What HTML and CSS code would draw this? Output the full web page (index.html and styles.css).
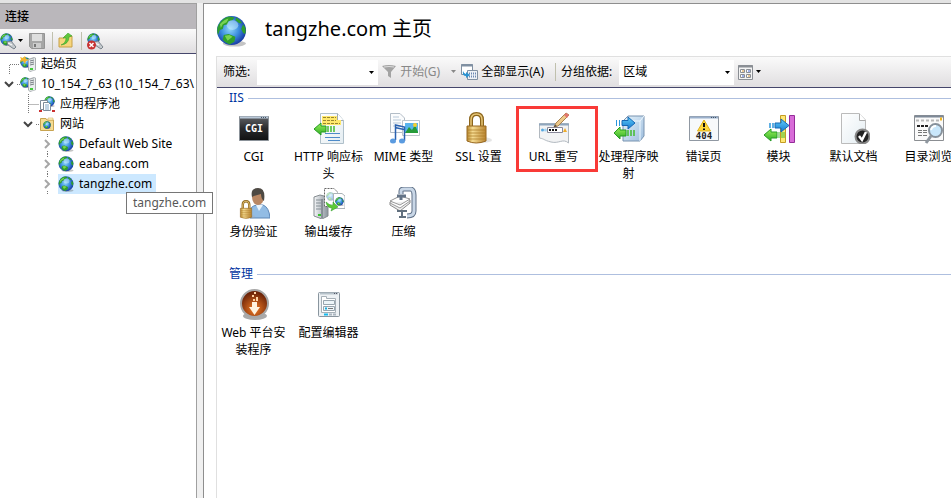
FILE: index.html
```html
<!DOCTYPE html>
<html lang="zh-CN">
<head>
<meta charset="utf-8">
<title>tangzhe.com 主页</title>
<link rel="stylesheet" href="styles.css">
</head>
<body>
<svg class="defs" aria-hidden="true">
  <defs>
    <radialGradient id="sea" cx=".45" cy=".45" r=".6"><stop offset="0" stop-color="#8fd8fa"/><stop offset=".5" stop-color="#3d8fe0"/><stop offset="1" stop-color="#12309c"/></radialGradient>
    <linearGradient id="brass" x2="1"><stop offset="0" stop-color="#b98a30"/><stop offset=".3" stop-color="#f6dc92"/><stop offset="1" stop-color="#b98430"/></linearGradient>
    <linearGradient id="green" x2="0" y2="1"><stop offset="0" stop-color="#9af05c"/><stop offset="1" stop-color="#2fae24"/></linearGradient>
    <linearGradient id="blue" x2="0" y2="1"><stop offset="0" stop-color="#5ed0fa"/><stop offset="1" stop-color="#1878d0"/></linearGradient>
    <linearGradient id="paper" x2="1" y2="1"><stop offset="0" stop-color="#fff"/><stop offset="1" stop-color="#e4edf2"/></linearGradient>
    <linearGradient id="steel" x2="1"><stop offset="0" stop-color="#f4f6f8"/><stop offset="1" stop-color="#8b949c"/></linearGradient>
    <linearGradient id="ink" x2="0" y2="1"><stop offset="0" stop-color="#606266"/><stop offset=".5" stop-color="#2a2b2d"/><stop offset="1" stop-color="#101112"/></linearGradient>
    <radialGradient id="rust" cx=".5" cy=".7" r=".6"><stop offset="0" stop-color="#f07a24"/><stop offset="1" stop-color="#6d2408"/></radialGradient>
    <linearGradient id="cube" x2="1" y2="1"><stop offset="0" stop-color="#e6f3fb"/><stop offset="1" stop-color="#9dbddd"/></linearGradient>
  </defs>
  <symbol id="globe" viewBox="0 0 32 32">
    <ellipse cx="19" cy="29" rx="12" ry="3" fill="#555" opacity=".35"/>
    <circle cx="16" cy="15.500" r="15" fill="url(#sea)"/>
    <path d="M3 9Q7 2 14 1L19 2 17 5 13 6 12 9 8 10 7 14 4 15 2 20Q0 14 3 9ZM28 9Q32 14 30 19L28 18 26 14ZM8 20L13 19 20 22 19 27 14 30Q9 28 7 25ZM21 2Q25 4 27 8L24 8 20 5Z" fill="#2f9f2c"/>
    <path d="M4 9Q8 4 13 3L11 7 7 9 5 13ZM9 21L14 20 17 22 12 26Z" fill="#8be05d" opacity=".8"/>
    <ellipse cx="17" cy="10" rx="6" ry="5" fill="#d8f5ff" opacity=".45"/>
  </symbol>
  <symbol id="server" viewBox="0 0 16 16">
    <use href="#globe" x="0" y="1" width="11" height="11"/>
    <path d="M8 3L14 1 16 2V14L10 16 8 14Z" fill="#a8adb0"/><path d="M9 4L15 2V14L10 15 9 14Z" fill="#e9eded"/>
    <path d="M10 5L14 4M10 7L14 6M10 9L14 8" stroke="#777e83"/><path d="M10 13h3" stroke="#45c93d" stroke-width="2"/>
  </symbol>
  <symbol id="connect" viewBox="0 0 17 17"><use href="#globe" width="13" height="13"/><path d="M7 9L11 8 16 14 14 16 8 12Z" fill="#c4c9cd" stroke="#7b848c"/><path d="M8 10l4 2" stroke="#fff"/></symbol>
  <symbol id="arrow" viewBox="0 0 7 4"><path d="M1 0H6L3.500 3Z" fill="currentColor"/></symbol>
  <symbol id="open" viewBox="0 0 20 20"><path d="M5 8L9 12 13 8" fill="none" stroke="#444" stroke-width="2"/></symbol>
  <symbol id="closed" viewBox="0 0 20 20"><path d="M7 6L11 10 7 14" fill="none" stroke="#a6a6a6" stroke-width="2"/><path d="M9.500 0v3M9.500 17v3" stroke="#777" stroke-dasharray="1 1"/></symbol>
  <symbol id="lock" viewBox="0 0 32 32"><ellipse cx="19" cy="28" rx="10" ry="3" fill="#aaa" opacity=".3"/><path d="M8 16V8Q8 2 13.500 2T19 8V16" fill="none" stroke="#8c651c" stroke-width="4"/><path d="M8 16V8Q8 2 13.500 2T19 8V16" fill="none" stroke="#e8c878" stroke-width="1.500"/><path d="M4 14H23V29Q13 33 4 29Z" fill="url(#brass)" stroke="#986820"/><path d="M5 18H22M5 21H22M5 24H22M5 27H22" stroke="#a97825" opacity=".7"/></symbol>
</svg>

<div class="window">
  <aside class="sidebar">
    <h2 class="pane-title">连接</h2>
    <div class="connections-bar">
      <button class="tool" aria-label="连接到"><svg width="17" height="17"><use href="#connect"/></svg><svg class="drop" width="7" height="4"><use href="#arrow"/></svg></button>
      <button class="tool save" aria-label="保存" disabled><svg width="16" height="16" viewBox="0 0 16 16"><path d="M.5.5H15.500V15.500H2.500L.5 13.500Z" fill="#a6a6a6" stroke="#949494"/><path d="M3 1H13V8H3Z" fill="#dedede"/><path d="M4 10H12V15H4Z" fill="#ccc"/><path d="M5 11H7V14H5Z" fill="#777"/></svg></button>
      <span class="split"></span>
      <button class="tool" aria-label="向上"><svg width="16" height="16" viewBox="0 0 16 16"><path d="M1 5H6L7 3H14V14H1Z" fill="#f7d67d" stroke="#c6a048"/><path d="M3 12Q8 10 8 5H5L10 0 14 3 11 4Q11 11 3 12Z" fill="#5fc63d" stroke="#339a27" stroke-width=".5"/></svg></button>
      <span class="split"></span>
      <button class="tool" aria-label="删除连接"><svg width="17" height="17" viewBox="0 0 17 17"><use href="#connect" width="17" height="17"/><circle cx="4.500" cy="12" r="4.500" fill="#c83232"/><path d="M2.500 10L6.500 14M6.500 10L2.500 14" stroke="#fff" stroke-width="1.500"/></svg></button>
    </div>
    <ul class="tree">
      <li><div class="node"><svg class="joint" viewBox="0 0 20 20"><path d="M9.500 20V10.500H20" class="dots"/></svg><svg class="glyph" viewBox="0 0 16 16"><use href="#server" width="16" height="16"/><path d="M0 1L3 2 5 0 6 3 9 4 6 5 5 8 3 5 0 6 1 3Z" fill="#f4b52c"/></svg><span>起始页</span></div></li>
      <li><div class="node"><svg class="joint" viewBox="0 0 20 20"><use href="#open"/><path d="M17 10.500H20" class="dots"/></svg><svg class="glyph"><use href="#server"/></svg><span>10_154_7_63 (10_154_7_63\</span></div>
        <ul>
          <li><div class="node"><svg class="joint" viewBox="0 0 20 20"><path d="M9.500 0V20M9.500 10.500H20" class="dots"/></svg><svg class="glyph" viewBox="0 0 16 16"><use href="#globe" x="5" width="11" height="11"/><path d="M1.500 4.500H8.500V13.500H1.500Z" fill="#fff" stroke="#7d8b98"/><path d="M4.500 6.500H9.500L11.500 8.500V14.500H4.500Z" fill="#fff" stroke="#7d8b98"/><path d="M6 9H10M6 11H10M6 13H10" stroke="#80a7c8"/><path d="M0 15H3M13 15H16" stroke="#cb3030" stroke-width="2"/></svg><span>应用程序池</span></div></li>
          <li><div class="node"><svg class="joint" viewBox="0 0 20 20"><use href="#open"/><path d="M17 10.500H20" class="dots"/></svg><svg class="glyph" viewBox="0 0 16 16"><path d="M1.500 2.500H7L8 4H14.500V14.500H1.500Z" fill="#f6dc91" stroke="#c8a451"/><path d="M9 2H14V4H9Z" fill="#fff5c5" stroke="#c8a451" stroke-width=".5"/><use href="#globe" x="4" y="5" width="8" height="8"/></svg><span>网站</span></div>
            <ul>
              <li><div class="node"><svg class="joint"><use href="#closed"/></svg><svg class="glyph"><use href="#globe"/></svg><span>Default Web Site</span></div></li>
              <li><div class="node"><svg class="joint"><use href="#closed"/></svg><svg class="glyph"><use href="#globe"/></svg><span>eabang.com</span></div></li>
              <li><div class="node"><svg class="joint"><use href="#closed"/></svg><div class="selected"><svg class="glyph"><use href="#globe"/></svg><span>tangzhe.com</span></div></div></li>
            </ul>
          </li>
        </ul>
      </li>
    </ul>
    <div class="tooltip" role="tooltip">tangzhe.com</div>
  </aside>

  <main class="page">
    <header class="page-head"><svg width="31" height="32"><use href="#globe"/></svg><h1>tangzhe.com 主页</h1></header>
    <div class="features">
      <div class="filter-bar">
        <label for="filter">筛选:</label>
        <span class="combo"><input id="filter" type="text"><svg class="combo-arrow" width="7" height="4"><use href="#arrow"/></svg></span>
        <button class="command start" disabled><svg width="15" height="14" viewBox="0 0 15 14"><path d="M0 1Q7-1 14 1L9 7V13L6 11V7Z" fill="#a3a3a3"/><path d="M2 2Q7 1 12 2" stroke="#ddd" fill="none"/></svg>开始(G)<svg class="drop" width="7" height="4"><use href="#arrow"/></svg></button>
        <button class="command all"><svg width="17" height="16" viewBox="0 0 17 16"><path d="M.5.5H11.500V10.500H.5Z" fill="#fff" stroke="#8090a2"/><path d="M0 1.500H12" stroke="#8090a2" stroke-width="2"/><path d="M6.500 6.500H16.500V15.500H6.500Z" fill="#eef2f6" stroke="#8090a2"/><path d="M8 9.500H15M8 12.500H15" stroke="#6b87b3" stroke-dasharray="1 1" stroke-width="2"/><path d="M2 7Q3 10 5 10V8L9 11 5 14V12Q1 12 2 7Z" fill="#2c93d1"/></svg>全部显示(A)</button>
        <span class="split"></span>
        <label for="group">分组依据:</label>
        <span class="combo"><select id="group"><option>区域</option></select><svg class="combo-arrow" width="7" height="4"><use href="#arrow"/></svg></span>
        <button class="command view" aria-label="视图"><svg width="15" height="15" viewBox="0 0 15 15"><path d="M.5.5H14.500V14.500H.5Z" fill="#f4f4f4" stroke="#8a8e94"/><path d="M0 1.500H15" stroke="#8a8e94" stroke-width="2"/><g fill="#fff" stroke="#8a8e94"><path d="M2.500 4.500h4v3h-4zM8.500 4.500h4v3h-4zM2.500 9.500h4v3h-4zM8.500 9.500h4v3h-4z"/></g><path d="M4 6h2M10 11h2" stroke="#d09030"/><path d="M10 6h2M4 11h2" stroke="#4060d0"/></svg><svg class="drop" width="7" height="4"><use href="#arrow"/></svg></button>
      </div>

      <section class="group">
        <h3>IIS</h3>
        <div class="grid">
          <a class="item" href="#"><svg viewBox="0 0 32 32"><path d="M1.500 4.500H30.500V28.500H1.500Z" fill="url(#ink)" stroke="#8b9299"/><path d="M2 5.500H30" stroke="#b9c8d8" stroke-width="2"/><path d="M23 5.500H29" stroke="#456" stroke-dasharray="1 1"/><text x="16" y="20" class="cgi">CGI</text></svg><span>CGI</span></a>
          <a class="item" href="#"><svg viewBox="0 0 32 32"><path d="M7.500 1.500H24.500L30.500 8.500V31.500H7.500Z" fill="url(#paper)" stroke="#b0c0ca"/><path d="M24.500 1.500V8.500H30.500" fill="#fff" stroke="#a0aab2"/><path d="M9 4H24V8H28V13H9Z" fill="#ffe86b"/><path d="M10 5.500H23M10 8.500H23M10 11.500H27" stroke="#9a862d" stroke-dasharray="3 1"/><path d="M1 17L8 11V14H13V20H8V23Z" fill="url(#green)" stroke="#249b22"/><path d="M15 14V20M18 14V20M21 14V20" stroke="#45bd32" stroke-width="1.500"/><path d="M12 21.500H27M12 25.500H27M15 28.500H27" stroke="#4e8bc9"/></svg><span>HTTP 响应标<br>头</span></a>
          <a class="item" href="#"><svg viewBox="0 0 32 32"><path d="M2.500 1.500H12L16.500 6V20.500H2.500Z" fill="#fbfcfd" stroke="#b3bdc7"/><path d="M5 5H11M5 8H13M5 11H13M5 14H13" stroke="#b7c8d8"/><path d="M14.500 8.500H31.500V23.500H14.500Z" fill="#fff" stroke="#bdc5cb"/><path d="M17 11H30V21H17Z" fill="#58b4ec"/><path d="M17 21L21 15 24 18 27 13 30 20V21Z" fill="#269b39"/><circle cx="27" cy="13" r="2" fill="#f6cf2f"/><path d="M7.500 28V13L16.500 15V29M7 15.500L16 17.500" fill="none" stroke="#2b62b0" stroke-width="1.500"/><ellipse cx="5" cy="29" rx="3" ry="2.500" fill="#5b9be0"/><ellipse cx="14" cy="29" rx="3" ry="2.500" fill="#5b9be0"/></svg><span>MIME 类型</span></a>
          <a class="item" href="#"><svg viewBox="0 0 32 32"><use href="#lock" width="32" height="32"/></svg><span>SSL 设置</span></a>
          <a class="item marked" href="#"><svg viewBox="0 0 32 32"><path d="M1.500 11.500H30.500V31C25 26 21 32 13 30S7 27 1.500 26Z" fill="#f2f3f4" stroke="#b2b9c0"/><path d="M1 12.500H31" stroke="#8fa6be" stroke-width="2"/><path d="M9.500 15.500H24.500V20.500H9.500Z" fill="#fff" stroke="#889"/><path d="M11 18H20" stroke="#111" stroke-width="2" stroke-dasharray="2 1"/><circle cx="4.500" cy="18" r="1.500" fill="#58a8df"/><circle cx="7.500" cy="18" r="1.500" fill="#a3d4f3"/><path d="M27 16L29 20H25Z" fill="#efad2b"/><path d="M16 15L18 11 28 1 31 3 20 14Z" fill="#edc98a" stroke="#a88250"/><path d="M26 3L28 1 31 3 29 6Z" fill="#e37670"/><path d="M16 15L17 13 19 14Z" fill="#333"/></svg><span>URL 重写</span></a>
          <a class="item" href="#"><svg viewBox="0 0 32 32"><path d="M10 9L15 4H31V24L27 29H10Z" fill="url(#cube)" stroke="#7893b0"/><path d="M10 9H27V29M27 9L31 4" fill="none" stroke="#eef8ff"/><path d="M3 8H4V14H3ZM6 8H7V14H6Z" fill="#2995dc"/><path d="M9 8.500H15V5L22 11 15 17V13.500H9Z" fill="url(#blue)" stroke="#1768b4"/><path d="M1 21L7 15V18H13V24H7V27Z" fill="url(#green)" stroke="#279b25"/><path d="M15 18V24M18 18V24M21 18V24" stroke="#42bc2c" stroke-width="1.500"/></svg><span>处理程序映<br>射</span></a>
          <a class="item" href="#"><svg viewBox="0 0 32 32"><path d="M1.500 4.500H30.500V28.500H1.500Z" fill="#f7f9fb" stroke="#9098a2"/><path d="M2 5.500H30" stroke="#9bb0cc" stroke-width="2"/><path d="M23 5.500H29" stroke="#456" stroke-dasharray="1 1"/><path d="M16 8L22.500 19H9.500Z" fill="#ffd83d" stroke="#ddb01b" stroke-linejoin="round"/><path d="M16 11V15M16 16.500V18" stroke="#111" stroke-width="2"/><text x="16" y="27" class="err">404</text></svg><span>错误页</span></a>
          <a class="item" href="#"><svg viewBox="0 0 32 32"><path d="M17.500 3.500H22.500V30.500H17.500Z" fill="#ffe875" stroke="#c49d23"/><path d="M26.500 3.500H31.500V30.500H26.500Z" fill="#d86cd8" stroke="#942c99"/><path d="M7 11V16M10 11V16" stroke="#2d97dc" stroke-width="1.500"/><path d="M12 11H18V7L26 13.500 18 20V16H12Z" fill="url(#blue)" stroke="#1768b4"/><path d="M1 23L8 17V20H14V26H8V29Z" fill="url(#green)" stroke="#279b25"/><path d="M16 20V26M19 20V26M21 20V26" stroke="#42bc2c"/></svg><span>模块</span></a>
          <a class="item" href="#"><svg viewBox="0 0 32 32"><path d="M3.500 1.500H21L27.500 8V31.500H3.500Z" fill="url(#paper)" stroke="#bbb"/><path d="M21.500 1.500V8.500H27.500" fill="#fff" stroke="#aaa"/><circle cx="24.500" cy="24.500" r="7" fill="#222" stroke="#888" stroke-width="2"/><path d="M21 24L24 28 28 20" fill="none" stroke="#fff" stroke-width="2.500"/></svg><span>默认文档</span></a>
          <a class="item" href="#"><svg viewBox="0 0 32 32"><path d="M1.500 3.500H30.500V28.500H1.500Z" fill="#fafafa" stroke="#8b8e92"/><path d="M2 4.500H30" stroke="#7d8997" stroke-width="2"/><path d="M3 8.500H28" stroke="#b7b7b7" stroke-dasharray="3 2" stroke-width="2"/><path d="M27 7H29" stroke="#f0b522" stroke-width="3"/><path d="M4 14H15" stroke="#222" stroke-width="2" stroke-dasharray="3 1"/><path d="M5 18.500H14M5 20.500H14M5 23.500H14" stroke="#777" stroke-dasharray="4 1"/><circle cx="22.500" cy="18.500" r="6.500" fill="#c9e7fb" stroke="#87919b" stroke-width="2"/><path d="M18 24L13 31" stroke="#8e969e" stroke-width="3"/><path d="M18 18Q19 14 23 14" stroke="#fff" fill="none" stroke-width="2"/></svg><span>目录浏览</span></a>
          <a class="item" href="#"><svg viewBox="0 0 32 32"><path d="M12 31V25Q12 19 19 18H25Q31 20 32 31Z" fill="#92bce4" stroke="#5c87b7"/><path d="M18 18L21 24 25 18Z" fill="#e9f4fc"/><ellipse cx="20" cy="10" rx="6" ry="8" fill="#b98763"/><path d="M14 10Q12 1 20 1T26 14Q23 12 23 7 18 8 14 10Z" fill="#4e4943"/><use href="#lock" x="0" y="13" width="19" height="19"/></svg><span>身份验证</span></a>
          <a class="item" href="#"><svg viewBox="0 0 32 32"><path d="M1 10L7 8 15 10V29L9 32 1 29Z" fill="url(#steel)" stroke="#858c90"/><path d="M9 12V31" stroke="#59636a"/><path d="M3 13H8M3 16H8M3 19H8M3 22H8" stroke="#858f95"/><path d="M5 28H8" stroke="#38c52d" stroke-width="2"/><path d="M11.500 1.500H21L24.500 5V19.500H11.500Z" fill="#fff" stroke="#666" stroke-dasharray="2 1"/><use href="#globe" x="13" y="5" width="9" height="9" opacity=".4"/><path d="M20.500 6.500H29L32 9V21.500H20.500Z" fill="#fff" stroke="#abb3b8"/><use href="#globe" x="22" y="10" width="9" height="9"/><path d="M13 15Q17 19 20 18V15L25 20 18 24 19 21Q14 21 13 15Z" fill="#5dca35" stroke="#299824" stroke-width=".5"/></svg><span>输出缓存</span></a>
          <a class="item" href="#"><svg viewBox="0 0 32 32"><path d="M13 7V4Q13 2 16 2H23Q26 3 26 8V24Q26 29 19 29" fill="none" stroke="#607187" stroke-width="5"/><path d="M13 7V4Q13 2 16 2H23Q26 3 26 8V24Q26 29 19 29" fill="none" stroke="#c9d7e7" stroke-width="3"/><path d="M2 18L12 24 22 16V13L12 9 2 15Z" fill="#eee" stroke="#8b8b8b"/><path d="M2 16L12 21 22 14M2 14L12 9 22 12 12 18Z" fill="#fff" stroke="#999"/><path d="M9 9H18M13 8V13" stroke="#647487" stroke-width="3"/><path d="M14 24V30M9 24H19M11 30H18" stroke="#61707f" stroke-width="2"/></svg><span>压缩</span></a>
        </div>
      </section>

      <section class="group">
        <h3>管理</h3>
        <div class="grid">
          <a class="item" href="#"><svg viewBox="0 0 32 32"><ellipse cx="17" cy="28" rx="12" ry="4" fill="#555" opacity=".5"/><circle cx="16.500" cy="15.500" r="13.500" fill="url(#rust)" stroke="#a7a7a7" stroke-width="2"/><path d="M14 14H19V19H22L16.500 27 11 19H14Z" fill="#fff3df"/><path d="M15 12H17M18 10H20M14 8H16M16 5H18M18 12H20" stroke="#ffd2a2" stroke-width="2"/></svg><span>Web 平台安<br>装程序</span></a>
          <a class="item" href="#"><svg viewBox="0 0 32 32"><rect x="5.500" y="4.500" width="21" height="24" rx="1" fill="#edf1f4" stroke="#89959e"/><path d="M7 5.500H25" stroke="#b6c2ca" stroke-width="2"/><path d="M21 5.500H25" stroke="#556" stroke-dasharray="1 1"/><path d="M8.500 8.500H13.500V10.500H22.500V24.500H8.500Z" fill="#fff" stroke="#a6b0b7"/><path d="M10.500 12.500H21.500V16.500H10.500ZM10.500 18.500H21.500V22.500H10.500Z" fill="#edf5f8" stroke="#98a5ae"/><path d="M12 20.500H14" stroke="#16abdc" stroke-width="2"/><path d="M15 20.500H20" stroke="#777"/><path d="M11 26.500H15" stroke="#16b9ec" stroke-width="2"/><path d="M16 26.500H24" stroke="#abb6bf" stroke-width="2" stroke-dasharray="3 1"/></svg><span>配置编辑器</span></a>
        </div>
      </section>
    </div>
  </main>
</div>
</body>
</html>
```

FILE: styles.css
```css
*, *::after { box-sizing: border-box; }

body {
  margin: 0;
  font: 12px/20px "Noto Sans", "Noto Sans CJK SC", sans-serif;
  color: #000;
  background: #f0f0f0;
  overflow: hidden;
}

h1, h2, h3 { margin: 0; font-weight: 400; }
svg { display: block; flex: none; }
button, input, select { font: inherit; color: inherit; border: 0; padding: 0; margin: 0; background: none; }
ul { list-style: none; margin: 0; padding: 0; }
.defs { position: absolute; width: 0; height: 0; }

.window {
  display: flex;
  gap: 6px;
  min-height: 100vh;
  border-top: 3px solid #e3e3e3;
}

.sidebar {
  position: relative;
  flex: none;
  width: 197px;
  background: #fff;
  border: solid #a0a0a0;
  border-width: 1px 1px 0 0;
}
.pane-title {
  height: 25px;
  padding-left: 5px;
  font-size: 12px;
  line-height: 25px;
  font-weight: 500;
  background: #bab7bb;
}
.connections-bar {
  display: flex;
  align-items: center;
  gap: 5px;
  height: 25px;
  background: linear-gradient(#fafafa, #dfdddf);
  border-bottom: 1px solid #45466b;
}
.tool { display: flex; align-items: center; }
.connections-bar .split { margin-left: 2px; }
.split { flex: none; width: 1px; height: 18px; background: #c0c0ad; }

.tree ul .node { padding-left: 19px; }
.tree ul ul .node { padding-left: 38px; }
.tree { overflow: hidden; }
.node { display: flex; align-items: center; height: 20px; white-space: nowrap; }
.joint { width: 20px; height: 20px; }
.glyph { width: 16px; height: 16px; margin-right: 5px; }
.dots { fill: none; stroke: #777; stroke-dasharray: 1 1; }
.selected {
  display: flex;
  align-items: center;
  height: 20px;
  padding-right: 4px;
  background: #cce8ff;
}
.tooltip {
  position: absolute;
  z-index: 1;
  left: 126px;
  top: 188px;
  padding: 0 6px;
  color: #575757;
  background: #fff;
  border: 1px solid #767676;
}

.page {
  flex: 1;
  min-width: 0;
  display: flex;
  flex-direction: column;
  padding-left: 12px;
  background: #fff;
  border: solid #8e8e8e;
  border-width: 1px 0 0 1px;
}
.page-head { display: flex; align-items: center; gap: 18px; height: 52px; padding-top: 2px; }
h1 { font-size: 20px; line-height: 28px; padding-bottom: 4px; }
.features { flex: 1; border: solid #e0e0e0; border-width: 1px 0 0 1px; }
.filter-bar {
  display: flex;
  align-items: center;
  height: 31px;
  padding-left: 6px;
  white-space: nowrap;
  background: linear-gradient(#fafafa, #e0dee0);
  border-bottom: 1px solid #45466b;
}
.filter-bar label { margin-right: 7px; }
.combo { position: relative; }
.combo input, .combo select {
  display: block;
  height: 25px;
  background: #fff;
  appearance: none;
  border-radius: 0;
}
.combo input { width: 121px; }
.combo select { width: 115px; padding-left: 4px; }
.combo-arrow { position: absolute; right: 3px; top: 11px; pointer-events: none; }
.command { display: flex; align-items: center; gap: 3px; }
.start { margin-left: 4px; color: #888; }
.start .drop { margin-left: 7px; }
.all { margin: 0 11px 0 4px; }
.filter-bar .split { margin-right: 5px; }
.view { margin-left: 4px; gap: 2px; }

.group { margin-bottom: 2px; }
h3 {
  display: flex;
  align-items: center;
  gap: 4px;
  height: 20px;
  padding-left: 12px;
  font-size: 12px;
  color: #0033a0;
}
h3::after { content: ""; flex: 1; height: 1px; background: #aebfdf; }
.grid {
  display: grid;
  grid-template-columns: repeat(10, 75px);
  grid-auto-rows: 75px;
  margin-left: -1px;
  padding-top: 4px;
}
.item {
  position: relative;
  display: flex;
  flex-direction: column;
  align-items: center;
  gap: 4px;
  color: #000;
  text-align: center;
  text-decoration: none;
  line-height: 17px;
  white-space: nowrap;
}
.item > svg { width: 32px; height: 32px; }
.marked::after {
  content: "";
  position: absolute;
  left: 0;
  top: -6px;
  width: 82px;
  height: 66px;
  border: 3px solid #f93a37;
}
.cgi, .err { text-anchor: middle; font-family: "DejaVu Sans Mono", monospace; font-weight: 700; }
.cgi { fill: #fff; font-size: 10px; }
.err { fill: #222; font-size: 9px; }
```
